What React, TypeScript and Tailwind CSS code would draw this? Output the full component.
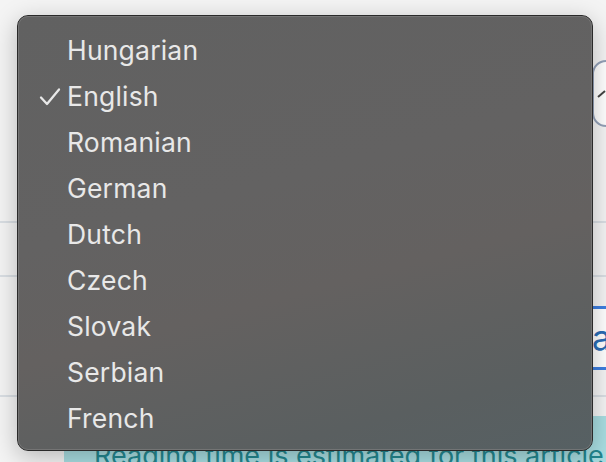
import React from "react";

const languages = [
	"Hungarian",
	"English",
	"Romanian",
	"German",
	"Dutch",
	"Czech",
	"Slovak",
	"Serbian",
	"French",
];

const App = () => {
	const selected = "English";

	return (
		<div
			className="relative w-[606px] h-[462px] overflow-hidden bg-[#f4f4f4]"
			style={{ fontFamily: "Inter, 'Noto Sans', sans-serif" }}
		>
			{/* page content underneath the menu */}
			<div className="flex flex-col">
				<div className="h-[60px]" />
				<div className="ml-[592px] w-[120px] h-[67px] rounded-[14px] border-2 border-[#93a1b8] bg-white flex items-center pl-[3px]">
					<svg width="10" height="10" viewBox="0 0 10 10">
						<path d="M1 8 L8 2" stroke="#444" strokeWidth="2" fill="none" />
					</svg>
				</div>
				<div className="h-[94px]" />
				<div className="h-[2px] bg-[#d9dee3]" />
				<div className="h-[52px]" />
				<div className="h-[2px] bg-[#d9dee3]" />
				<div className="h-[29px]" />
				<div className="ml-[590px] w-[120px] h-[64px] border-y-[3px] border-[#3e7fe0] bg-white flex items-center pl-[2px] text-[34px] text-[#2a6cb5] leading-none">
					a
				</div>
				<div className="h-[25px]" />
				<div className="h-[2px] bg-[#d9dee3]" />
				<div className="h-[19px]" />
				<div className="ml-[64px] h-[60px] bg-[#a8dde1] pl-[30px] pt-[26px] text-[27px] text-[#23878f] leading-none whitespace-nowrap">
					Reading time is estimated for this article
				</div>
			</div>

			{/* dropdown menu */}
			<div className="absolute left-[17px] top-[15px] w-[576px] h-[436px] rounded-[11px] border border-[#2a2a2a] shadow-[0_6px_24px_rgba(0,0,0,0.25)] bg-[linear-gradient(165deg,#616161_0%,#636262_40%,#646160_60%,#5a5f60_85%,#566063_100%)]">
				<div className="h-full w-full rounded-[10px] border border-[#7d7d7d]/70 pt-[11px]">
					{languages.map((lang) => (
						<div
							key={lang}
							className="h-[46px] flex items-center text-[26.5px] text-[#e8e8e8] tracking-[0.2px]"
						>
							<div className="w-[48px] flex justify-end pr-[6px]">
								{lang === selected && (
									<svg width="22" height="20" viewBox="0 0 22 20">
										<path
											d="M2 10.5 L8 17 L20 2.5"
											stroke="#e8e8e8"
											strokeWidth="2.3"
											fill="none"
											strokeLinecap="round"
											strokeLinejoin="round"
										/>
									</svg>
								)}
							</div>
							<span>{lang}</span>
						</div>
					))}
				</div>
			</div>
		</div>
	);
};

export default App;
